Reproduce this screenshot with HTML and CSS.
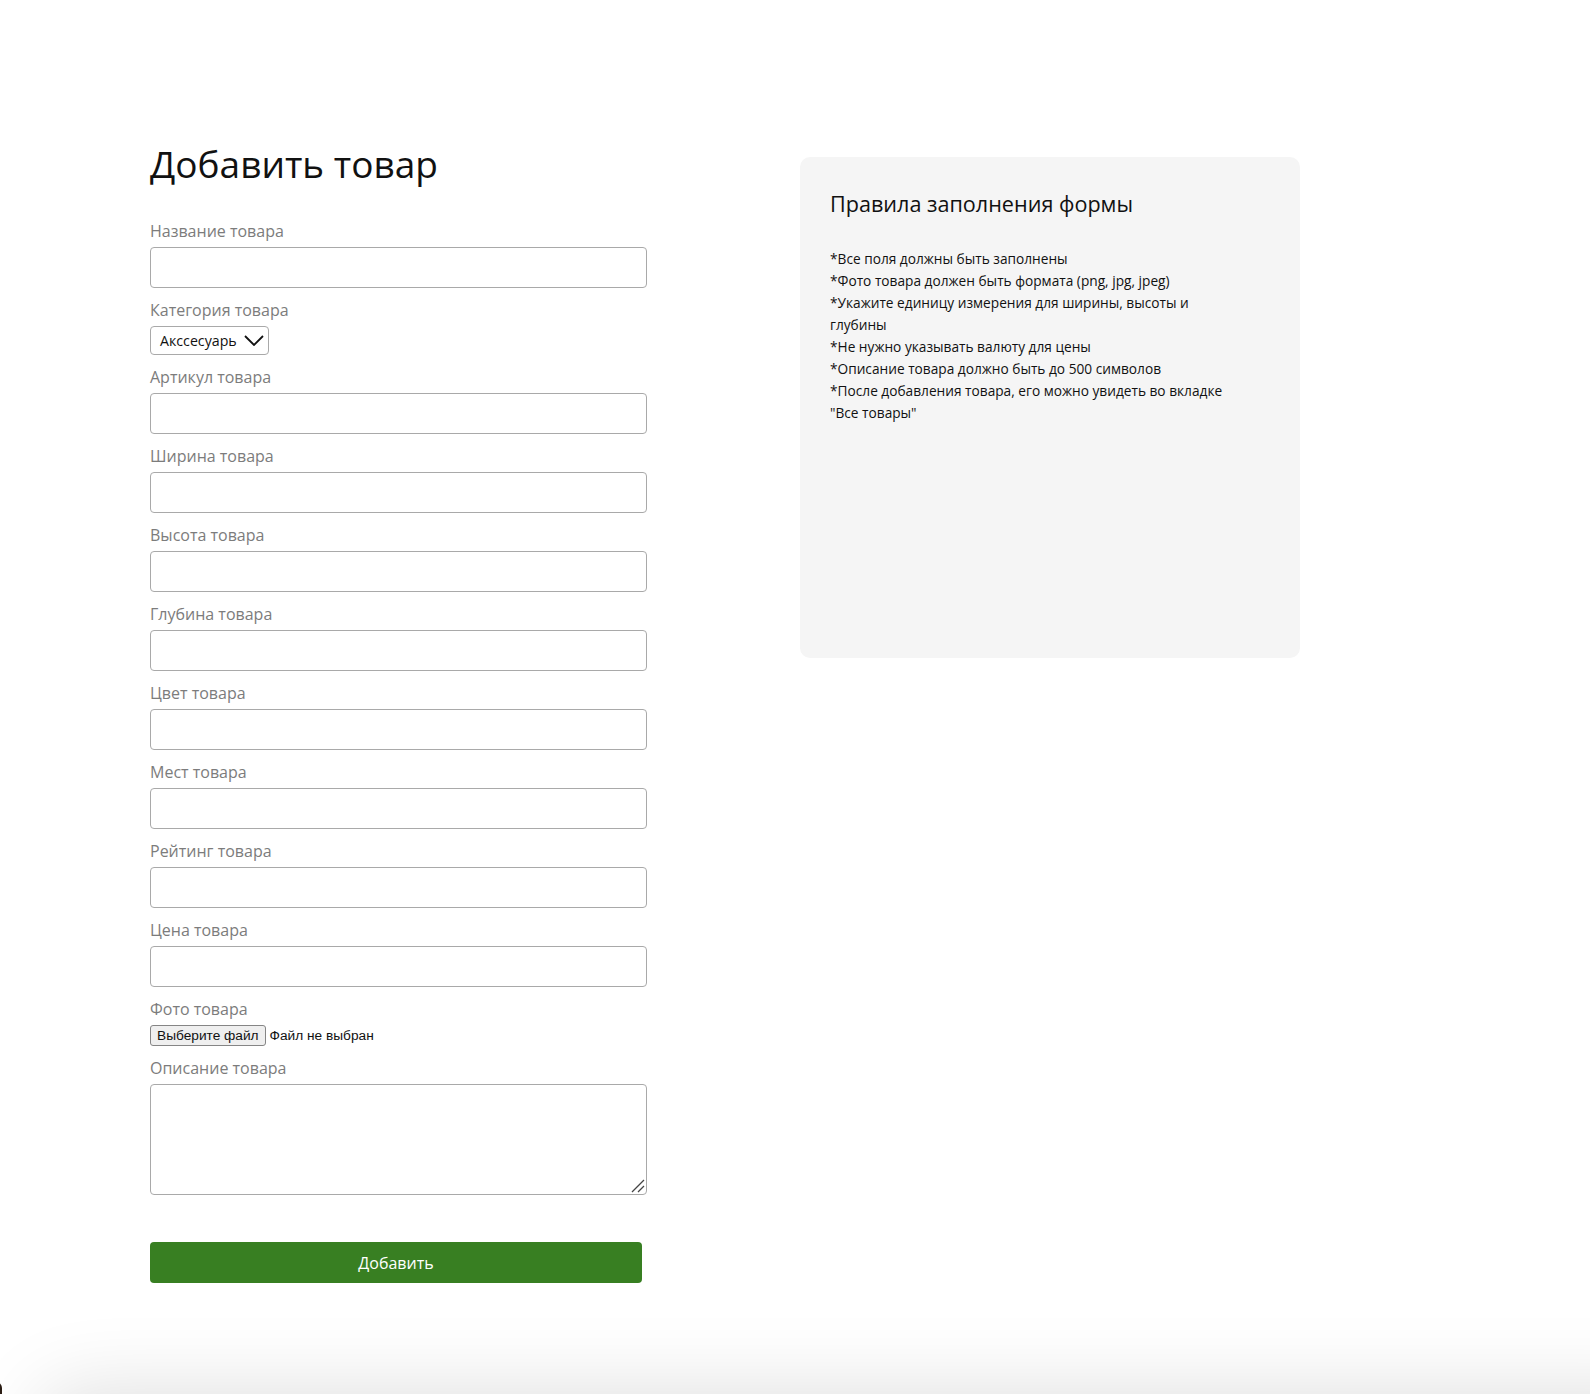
FILE: index.html
```html
<!DOCTYPE html>
<html lang="ru">
<head>
<meta charset="utf-8">
<title>Добавить товар</title>
<link rel="stylesheet" href="styles.css">
</head>
<body>
<main class="page">
  <section class="form-col">
    <h1 class="title">Добавить товар</h1>
    <form class="form">
      <div class="field"><label class="label">Название товара</label><input class="input" type="text"></div>
      <div class="field"><label class="label">Категория товара</label>
        <div class="select"><span class="select-text">Акссесуарь</span>
          <svg class="chev" width="20" height="11" viewBox="0 0 20 11"><path d="M1 1 L10 10 L19 1" fill="none" stroke="#111" stroke-width="1.8"/></svg>
        </div>
      </div>
      <div class="field"><label class="label">Артикул товара</label><input class="input" type="text"></div>
      <div class="field"><label class="label">Ширина товара</label><input class="input" type="text"></div>
      <div class="field"><label class="label">Высота товара</label><input class="input" type="text"></div>
      <div class="field"><label class="label">Глубина товара</label><input class="input" type="text"></div>
      <div class="field"><label class="label">Цвет товара</label><input class="input" type="text"></div>
      <div class="field"><label class="label">Мест товара</label><input class="input" type="text"></div>
      <div class="field"><label class="label">Рейтинг товара</label><input class="input" type="text"></div>
      <div class="field"><label class="label">Цена товара</label><input class="input" type="text"></div>
      <div class="field"><label class="label">Фото товара</label>
        <div class="file"><span class="file-btn">Выберите файл</span><span class="file-text">Файл не выбран</span></div>
      </div>
      <div class="field"><label class="label">Описание товара</label>
        <div class="textarea-wrap">
          <textarea class="textarea"></textarea>
          <svg class="grip" width="14" height="14" viewBox="0 0 14 14"><path d="M13 1 L1 13 M13 7 L7 13" fill="none" stroke="#444" stroke-width="1.3"/></svg>
        </div>
      </div>
      <button class="submit" type="button">Добавить</button>
    </form>
  </section>
  <aside class="rules">
    <h2 class="rules-title">Правила заполнения формы</h2>
    <p class="rules-text">*Все поля должны быть заполнены<br>*Фото товара должен быть формата (png, jpg, jpeg)<br>*Укажите единицу измерения для ширины, высоты и глубины<br>*Не нужно указывать валюту для цены<br>*Описание товара должно быть до 500 символов<br>*После добавления товара, его можно увидеть во вкладке "Все товары"</p>
  </aside>
</main>
<div class="window-shadow"></div>
<div class="window-edge"></div>
</body>
</html>
```

FILE: styles.css
```css
html, body {
  margin: 0;
  padding: 0;
  background: #fff;
  font-family: "Open Sans", "Noto Sans", sans-serif;
  color: #111;
  overflow: hidden;
}

.page {
  display: flex;
  align-items: flex-start;
  gap: 153px;
  padding: 139px 0 0 150px;
}

.form-col {
  width: 497px;
}

.title {
  margin: 0 0 31px;
  font-size: 37px;
  font-weight: 400;
  line-height: 50px;
  color: #111;
}

.form {
  display: flex;
  flex-direction: column;
}

.field {
  display: flex;
  flex-direction: column;
  align-items: flex-start;
  margin-bottom: 11px;
}

.label {
  display: block;
  font-size: 16px;
  line-height: 22px;
  color: #7c7c7c;
  margin-bottom: 5px;
}

.input {
  box-sizing: border-box;
  width: 497px;
  height: 41px;
  border: 1px solid #a9a9a9;
  border-radius: 4px;
  padding: 0 10px;
  font: 16px "Open Sans", sans-serif;
  background: #fff;
  margin: 0;
}

.select {
  box-sizing: border-box;
  display: flex;
  align-items: center;
  width: 119px;
  height: 29px;
  border: 1px solid #a9a9a9;
  border-radius: 4px;
  padding: 0 0 0 9px;
  font-size: 14.2px;
  color: #111;
  background: #fff;
}

.select-text {
  line-height: 18px;
}

.chev {
  margin-left: 7px;
}

.file {
  display: flex;
  align-items: center;
  font-family: "Liberation Sans", Arial, sans-serif;
  font-size: 13.7px;
  color: #111;
}

.file-btn {
  box-sizing: border-box;
  height: 21px;
  line-height: 19px;
  padding: 0 6px;
  border: 1px solid #858585;
  border-radius: 3px;
  background: #efefef;
  color: #111;
}

.file-text {
  margin-left: 4px;
}

.textarea-wrap {
  position: relative;
}

.textarea {
  display: block;
  box-sizing: border-box;
  width: 497px;
  height: 111px;
  border: 1px solid #a9a9a9;
  border-radius: 4px;
  margin: 0;
  padding: 8px 10px;
  font: 16px "Open Sans", sans-serif;
  resize: none;
}

.grip {
  position: absolute;
  right: 2px;
  bottom: 2px;
}

.submit {
  margin-top: 36px;
  width: 492px;
  height: 41px;
  border: none;
  border-radius: 4px;
  background: #387f22;
  color: #fff;
  font-family: "Open Sans", sans-serif;
  font-size: 16px;
  padding: 0;
}

.rules {
  box-sizing: border-box;
  width: 500px;
  height: 501px;
  margin-top: 18px;
  padding: 30px;
  background: #f5f5f5;
  border-radius: 10px;
}

.rules-title {
  margin: 0 0 28px;
  font-size: 21.6px;
  font-weight: 400;
  line-height: 33px;
  color: #111;
}

.rules-text {
  margin: 0;
  max-width: 400px;
  font-size: 13.7px;
  line-height: 22px;
  color: #111;
}

.window-shadow {
  position: fixed;
  left: 60px;
  right: -80px;
  top: 1410px;
  height: 300px;
  border-radius: 14px;
  background: #ddd;
  box-shadow: 0 0 80px 20px rgba(0, 0, 0, 0.13);
}

.window-edge {
  position: fixed;
  left: -10px;
  top: 1382px;
  width: 12px;
  height: 40px;
  border-radius: 8px;
  background: #2b1d14;
}
```
